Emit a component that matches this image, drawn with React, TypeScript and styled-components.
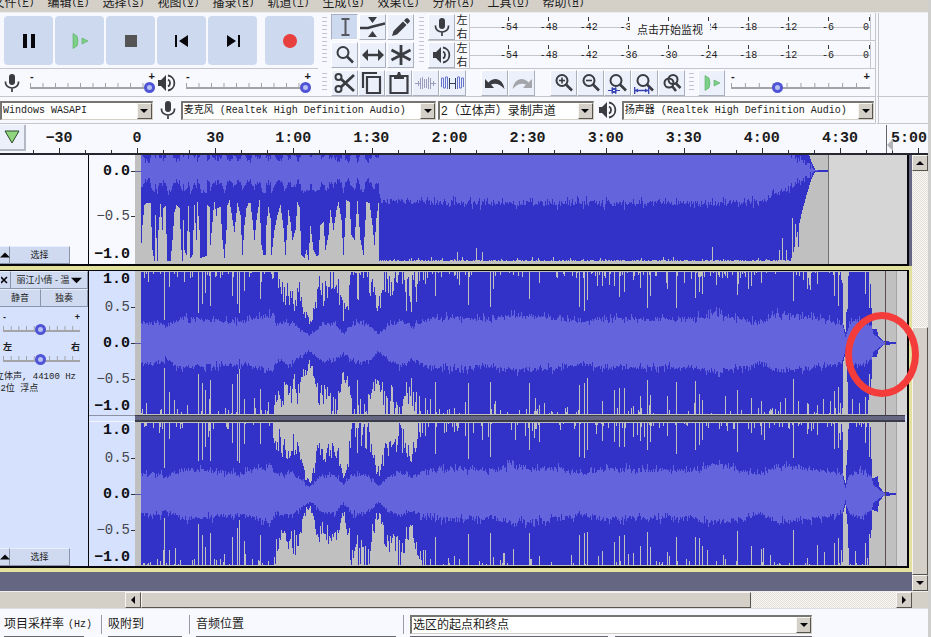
import React from "react";
import styled, { createGlobalStyle, css } from "styled-components";

const c = {
  face: "#d4d0c8",
  panel: "#f8f9fe",
  line: "#c4c6cc",
  button: "#cdd9ef",
  tool: "#ebf0fb",
  selected: "#d6e2fd",
  dark: "#646682",
  clip: "#c0c0c0",
  empty: "#d6d6d6",
  peak: "#3232c8",
  rms: "#6464dc",
  icon: "#3a3c42",
};

const cjk = `"Liberation Sans", "Noto Sans CJK SC", sans-serif`;
const mono = `"Liberation Mono", "Noto Sans CJK SC", monospace`;

const Global = createGlobalStyle`
  * { box-sizing: border-box; }
  body { margin: 0; background: #cfcfcd; font: 12px/16px ${cjk}; color: #1c1c20; overflow: hidden; }
  button, input, select { font: inherit; color: inherit; margin: 0; padding: 0; border: 0; border-radius: 0; }
  button { display: flex; align-items: center; justify-content: center; }
  svg { display: block; flex: none; }
`;

/* ---------- frame ---------- */

const Window = styled.div`
  position: relative;
  display: flex;
  flex-direction: column;
  height: 100vh;
  margin-right: 3px;
  background: ${c.panel};
`;

const MenuBar = styled.nav`
  display: flex;
  flex: none;
  align-items: flex-end;
  gap: 12px;
  height: 12px;
  padding-bottom: 1px;
  margin-left: -8px;
  background: ${c.face};
  overflow: hidden;
`;

const MenuItem = styled.button`
  flex: none;
  width: 43px;
  background: none;
  line-height: 16px;
  white-space: nowrap;
  small { font: 10px/16px "Liberation Mono", monospace; }
`;

const Dock = styled.div`
  display: grid;
  grid-template-columns: 318px 1fr 53px;
  flex: none;
  border-top: 1px solid #eceef2;
`;

const DeviceDock = styled.div`
  display: grid;
  grid-template-columns: 1fr 53px;
  flex: none;
`;

const Column = styled.div`
  display: flex;
  flex-direction: column;
  min-width: 0;
`;

const Bar = styled.div<{ $h: number; $gap?: number; $left?: number }>`
  display: flex;
  align-items: center;
  height: ${(p) => p.$h}px;
  gap: ${(p) => p.$gap ?? 0}px;
  padding-left: ${(p) => p.$left ?? 0}px;
  border-bottom: 1px solid ${c.line};
`;

const DockEnd = styled.div`
  border-left: 4px double ${c.line};
  border-bottom: 1px solid ${c.line};
`;

const TransportButton = styled.button<{ $apart?: boolean }>`
  width: 49px;
  height: 49px;
  border-radius: 4px;
  background: ${c.button};
  margin-left: ${(p) => (p.$apart ? 6 : 0)}px;
`;

const ToolButton = styled.button<{ $on?: boolean }>`
  flex: none;
  width: 27px;
  height: 26px;
  background: ${(p) => (p.$on ? c.button : c.tool)};
  border: 1px solid #fff;
  border-right-color: #a9afbd;
  border-bottom-color: #a9afbd;
  ${(p) => p.$on && css`border-color: #a9afbd #fff #fff #a9afbd;`}
`;

const Grip = styled.span<{ $h?: number }>`
  flex: none;
  width: 5px;
  height: ${(p) => p.$h ?? 20}px;
  margin: 0 4px;
  background: repeating-linear-gradient(#c3c5cc 0 1px, transparent 1px 4px);
`;

const Spacer = styled.span<{ $w: number }>`
  flex: none;
  width: ${(p) => p.$w}px;
`;

const Tools = styled.div`
  display: grid;
  grid-template-columns: 13px 84px 13px 1fr;
  grid-template-rows: 28px 28px;
`;

const ToolRow = styled.div`
  display: flex;
  align-items: center;
  gap: 1px;
`;

const GripCell = styled.div`
  grid-row: span 2;
  display: flex;
  align-items: center;
`;

/* ---------- meters ---------- */

const MeterRow = styled.div`
  display: flex;
  align-items: center;
  min-width: 0;
  border-bottom: 1px solid ${c.line};
`;

const Sides = styled.span`
  width: 14px;
  text-align: center;
  font-size: 11px;
  line-height: 14px;
`;

const MeterScale = styled.div`
  position: relative;
  flex: 1;
  display: grid;
  grid-template-columns: 19px repeat(9, 1fr) 22px;
  height: 26px;
  margin-right: 4px;
  border-left: 1px solid ${c.line};
  border-right: 1px solid ${c.line};
  background: linear-gradient(${c.line}, ${c.line}) 0 13px / 100% 1px no-repeat;
`;

const Mark = styled.span<{ $end?: boolean }>`
  padding-top: 4px;
  padding-right: ${(p) => (p.$end ? 1 : 0)}px;
  text-align: ${(p) => (p.$end ? "right" : "center")};
  font: 10px/19px ${mono};
  background: linear-gradient(#333, #333) ${(p) => (p.$end ? "right" : "center")} 3px / 1px 4px no-repeat;
`;

const MonitorHint = styled.button`
  position: absolute;
  top: 7px;
  left: 50%;
  width: 80px;
  height: 18px;
  transform: translateX(-50%);
  background: ${c.panel};
  font-size: 11px;
`;

/* ---------- sliders and lists ---------- */

const SliderBox = styled.label`
  flex: 1;
  display: grid;
  grid-template-columns: 1fr auto;
  font: bold 11px/9px ${cjk};
`;

const Range = styled.input`
  grid-column: span 2;
  appearance: none;
  width: 100%;
  height: 12px;
  background:
    linear-gradient(#a4a4a8, #a4a4a8) 0 6px / 100% 2px no-repeat,
    linear-gradient(90deg, #a0a0a4 1px, transparent 1px) 0 2px / 10% 4px repeat-x;
  &::-webkit-slider-thumb {
    appearance: none;
    width: 11px;
    height: 11px;
    border: 3px solid #4f55d6;
    border-radius: 50%;
    background: #b9c0f2;
  }
`;

const SelectFrame = styled.span<{ $w: number }>`
  display: flex;
  flex: ${(p) => p.$w} 1 0;
  min-width: 0;
  height: 19px;
  background: #fff;
  border: 2px solid #77756f;
  border-right: 1px solid ${c.face};
  border-bottom: 1px solid ${c.face};
`;

const SelectInput = styled.select<{ $mono?: boolean }>`
  appearance: none;
  flex: 1;
  min-width: 0;
  background: none;
  font: ${(p) => (p.$mono ? `10px/16px ${mono}` : `12px/16px ${cjk}`)};
  padding-left: 1px;
`;

const raised = css`
  background-color: ${c.face};
  border: 1px solid;
  border-color: #f6f5f2 #56544f #56544f #f6f5f2;
`;

const DropMark = styled.span`
  ${raised}
  display: flex;
  align-items: center;
  justify-content: center;
  width: 15px;
  pointer-events: none;
`;

/* ---------- ruler ---------- */

const Ruler = styled.div`
  display: grid;
  grid-template-columns: 26px 1fr;
  grid-template-rows: 23px 5px;
  flex: none;
  margin-top: 1px;
  border-bottom: 2px solid #26262e;
`;

const PinButton = styled.button`
  height: 26px;
  background: ${c.tool};
  border-right: 2px solid #b4b8c4;
  border-bottom: 2px solid #b4b8c4;
`;

const Times = styled.div`
  display: grid;
  grid-template-columns: 72px repeat(10, 1fr) 49px;
  text-align: center;
  font: bold 15px/27px ${mono};
  span:first-child { padding-right: 6px; }
`;

const LastTime = styled.span`
  position: relative;
  height: 28px;
  margin-left: 7px;
  padding-right: 1px;
  border-left: 1px solid #66666c;
  text-align: right;
  svg { position: absolute; left: 0; bottom: 2px; }
`;

const Ticks = styled.svg`
  grid-column: 1 / -1;
  width: 100%;
  height: 5px;
`;

/* ---------- tracks ---------- */

const Workspace = styled.div`
  display: grid;
  grid-template-columns: 1fr 16px;
  grid-template-rows: 1fr 17px;
  flex: 1;
  min-height: 0;
`;

const TrackList = styled.main`
  background: ${c.dark};
  overflow: hidden;
`;

const FirstTrack = styled.section`
  display: grid;
  grid-template-columns: 89px 46px 1fr;
  grid-template-rows: 109px;
  margin-right: 3px;
  border-right: 2px solid #08080c;
  border-bottom: 2px solid #08080c;
  background: ${c.panel};
`;

const Focused = styled.section`
  border: solid #e2e29c;
  border-width: 4px 3px 4px 0;
`;

const StereoTrack = styled.div`
  display: grid;
  grid-template-columns: 89px 46px 1fr;
  grid-template-rows: 144px 7px 144px;
  border: solid #08080c;
  border-width: 1px 2px 2px 0;
  background: ${c.selected};
`;

const Panel = styled.div`
  grid-row: 1 / -1;
  display: flex;
  flex-direction: column;
  border-right: 1px solid #08080c;
  overflow: hidden;
  font-size: 10px;
`;

const PanelRow = styled.div<{ $foot?: boolean }>`
  display: flex;
  flex: none;
  width: ${(p) => (p.$foot ? "70px" : "100%")};
  height: 18px;
  margin-top: ${(p) => (p.$foot ? "auto" : 0)};
`;

const PanelButton = styled.button<{ $w?: number }>`
  flex: ${(p) => (p.$w ? "none" : 1)};
  width: ${(p) => (p.$w ? `${p.$w}px` : "auto")};
  gap: 1px;
  white-space: nowrap;
  background: #cfdaf0;
  border-right: 1px solid #8a94aa;
  border-bottom: 1px solid #8a94aa;
  border-top: 1px solid #e8effc;
  font-size: 9px;
`;

const PanelSlider = styled.div`
  display: flex;
  height: 30px;
  padding: 5px 8px 0 3px;
  label { font-size: 9px; line-height: 10px; }
`;

const PanelInfo = styled.p`
  margin: 4px 0 0 -5px;
  white-space: pre;
  font: 9px/12px ${mono};
`;

const Scale = styled.div<{ $rows: string }>`
  display: grid;
  grid-template-rows: ${(p) => p.$rows};
`;

const Level = styled.span<{ $b?: boolean }>`
  display: flex;
  align-items: center;
  justify-content: flex-end;
  white-space: nowrap;
  font: ${(p) => (p.$b ? `bold 15px/17px ${mono}` : `14px/17px ${mono}`)};
  color: ${(p) => (p.$b ? "#101014" : "#44464e")};
`;

const Dash = styled.i<{ $show?: boolean }>`
  width: 4px;
  height: 1px;
  margin-left: 1px;
  background: ${(p) => (p.$show ? "#333" : "transparent")};
`;

const Wave = styled.svg`
  width: 100%;
  height: 100%;
  background: ${c.empty};
  shape-rendering: crispEdges;
`;

const ScaleGap = styled.div`
  border-top: 1px solid #8c92a4;
  border-bottom: 1px solid #f2f6ff;
`;

const ChannelGap = styled.div`
  margin-right: 2px;
  background: ${c.dark};
  border-top: 1px solid #3a3b48;
  border-bottom: 2px solid #3a3b48;
`;

/* ---------- scroll bars ---------- */

const dither = css`
  background: repeating-conic-gradient(#e2dfd8 0 25%, #f8f7f4 0 50%) 0 0 / 2px 2px;
`;

const VScroll = styled.div`
  display: grid;
  grid-template-rows: 16px 156fr 249fr 16px;
  ${dither}
`;

const HScroll = styled.div`
  display: grid;
  grid-column: 1 / -1;
  grid-template-columns: 125fr 16px 610fr 145fr 16px 16px;
  background: ${c.face};
  border-top: 1px solid #f0efec;
`;

const Trough = styled.div`
  ${dither}
`;

const ScrollButton = styled.button`
  ${raised}
`;

const Thumb = styled.div`
  ${raised}
`;

/* ---------- selection bar ---------- */

const SelectionBar = styled.footer`
  display: grid;
  grid-template-columns: 98px 82px 208px 402px 1fr;
  column-gap: 6px;
  flex: none;
  height: 29px;
  padding: 6px 0 0 4px;
  border-top: 1px solid #dcdde2;
  overflow: hidden;
`;

const Field = styled.label<{ $rule?: boolean }>`
  display: flex;
  flex-direction: column;
  gap: 2px;
  > span:first-child {
    display: flex;
    flex: none;
    height: 19px;
    line-height: 19px;
    border-right: ${(p) => (p.$rule ? "1px solid #9a9ca4" : "0")};
  }
  small { font: 10px/20px ${mono}; margin-left: 4px; }
`;

const FieldBox = styled.input<{ $w: number }>`
  width: ${(p) => p.$w}px;
  height: 20px;
  border: 2px solid #66666c;
  background: #fff;
`;

const RangeFields = styled.div`
  display: grid;
  grid-template-columns: 1fr 1fr;
  gap: 2px 7px;
  > span { grid-column: span 2; }
  input { width: 100%; }
`;

const Highlight = styled.div`
  position: absolute;
  top: 312px;
  right: 9px;
  width: 74px;
  height: 85px;
  border: 7px solid #f43c3a;
  border-radius: 50%;
  pointer-events: none;
`;

/* ---------- icons ---------- */

const Mic = () => (
  <svg width="20" height="20" viewBox="0 0 20 20" fill="none" stroke={c.icon} strokeWidth="1.7">
    <rect x="7" y="1" width="6" height="11" rx="3" fill={c.icon} stroke="none" />
    <path d="M3.500 8.500v1a6.500 5.500 0 0 0 13 0v-1M10 15v4" />
  </svg>
);
const Speaker = () => (
  <svg width="20" height="20" viewBox="0 0 20 20" fill="none" stroke={c.icon} strokeWidth="1.8">
    <path d="M1 7h3l5-5v16l-5-5H1z" fill={c.icon} stroke="none" />
    <path d="M11 6.500a4 4 0 0 1 0 7M11 2.500a7.600 7.600 0 0 1 0 15" />
  </svg>
);
const Lens = ({ kind }: { kind?: "in" | "out" | "sel" | "fit" | "toggle" }) => (
  <svg width="22" height="22" viewBox="0 0 22 22" fill="none" stroke={c.icon} strokeWidth="2">
    {kind === "toggle" && <circle cx="8" cy="11" r="4.500" />}
    <circle cx={kind === "toggle" ? 12 : 9} cy={kind === "toggle" ? 7.5 : 8.5} r={kind === "toggle" ? 4.5 : 5.5} />
    <path d={kind === "toggle" ? "M14.500 11l5 5M11 14l4 5" : "M13 12.500l6 6"} strokeWidth="2.600" />
    {(kind === "in" || kind === "out") && <path d="M6 8.500h6" strokeWidth="1.600" />}
    {kind === "in" && <path d="M9 5.500v6" strokeWidth="1.600" />}
    {kind === "sel" && (
      <path d="M1 18.500h4M9 18.500h4M5 15.500v6l4-3zM9 15.500v6l-4-3z" stroke="#3440b0" strokeWidth="1" fill="#3440b0" />
    )}
    {kind === "fit" && (
      <g stroke="#3440b0" strokeWidth="1.300" fill="#3440b0">
        <path d="M.7 15v7M14.700 15v7M1 18.500h13" />
        <path d="M1 18.500l3-2v4zM14 18.500l-3-2v4z" stroke="none" />
      </g>
    )}
  </svg>
);
const Play = () => (
  <svg width="20" height="20" viewBox="0 0 20 20" fill="#7ccf86" stroke="#56ad62" strokeWidth=".6">
    <path d="M3 2.500l4 2.500q2 5 0 10l-4 2.500z" />
    <path d="M12 7l6 3-6 3z" />
  </svg>
);
const IBeam = () => (
  <svg width="20" height="20" viewBox="0 0 20 20" fill="none" stroke="#55585f" strokeWidth="2">
    <path d="M6.500 2h8M6.500 18h8M10.500 2v16" />
  </svg>
);
const Envelope = () => (
  <svg width="25" height="20" viewBox="0 0 25 20" fill={c.icon}>
    <path d="M8 0h9l-4.500 6zM8 20h9l-4.500-6z" />
    <path d="M0 11h8l5-1.500 12-3" fill="none" stroke={c.icon} strokeWidth="2.500" />
  </svg>
);
const Pencil = () => (
  <svg width="20" height="20" viewBox="0 0 20 20" fill={c.icon}>
    <path d="M1 19l1.500-5L12 4.500 15.500 8 6 17.500zM13 3.500l2-2q1-.8 2 0L18.500 3q.8 1 0 2l-2 2z" />
  </svg>
);
const Shift = () => (
  <svg width="22" height="20" viewBox="0 0 22 20" fill={c.icon}>
    <path d="M0 10l6-6v4.800h10V4l6 6-6 6v-4.800H6V16z" />
  </svg>
);
const Star = () => (
  <svg width="22" height="22" viewBox="0 0 22 22" stroke={c.icon} strokeWidth="2.800">
    <path d="M11 1v20M1.500 6l19 10M20.500 6l-19 10" />
  </svg>
);
const Cut = () => (
  <svg width="22" height="22" viewBox="0 0 22 22" fill="none" stroke={c.icon} strokeWidth="2">
    <circle cx="4.500" cy="5" r="3" />
    <circle cx="4.500" cy="17" r="3" />
    <path d="M7 7l13 12M7 15L20 3" strokeWidth="2.800" />
  </svg>
);
const Copy = () => (
  <svg width="22" height="24" viewBox="0 0 22 24" fill="none" stroke={c.icon} strokeWidth="2.200">
    <path d="M2 17V2h14M6 6h13v16H6z" />
  </svg>
);
const Paste = () => (
  <svg width="22" height="24" viewBox="0 0 22 24" fill="none" stroke={c.icon} strokeWidth="2.200">
    <path d="M2.500 5h17v17h-17z" />
    <path d="M6 4h3l1-3h2l1 3h3v4H6z" fill={c.icon} stroke="none" />
  </svg>
);
const Trim = () => (
  <svg width="21" height="18" viewBox="0 0 21 18" fill="none" stroke="#9a9eba" strokeWidth="1">
    <path d="M0 9.500h5M16 9.500h5M5.500 4v11M7.500 3v12M9.500 5v9M11.500 5v9M13.500 3v12M15.500 4v11M3.500 7v5M18.500 7v5" />
  </svg>
);
const Silence = () => (
  <svg width="23" height="18" viewBox="0 0 23 18" fill="none" stroke="#6673cc" strokeWidth="1">
    <path d="M.5 13V4h2v10h2V3h2v12M16.500 15V3h2v11h2V4h2v9" />
    <path d="M8 9.500h7M8.500 4v11M14.500 4v11" stroke="#33405e" />
  </svg>
);
const Undo = ({ redo }: { redo?: boolean }) => (
  <svg width="22" height="18" viewBox="0 0 22 18" fill={redo ? "#a3a5aa" : c.icon}>
    <path d={redo ? "M21 5v9h-9l3-3.500Q8 8 1.500 15 3 6 10 5q5 0 7.500 3.500z" : "M1 5v9h9l-3-3.500Q14 8 20.500 15 19 6 12 5q-5 0-7.500 3.500z"} />
  </svg>
);
const Arrow = ({ d = "down", s = 8 }: { d?: "down" | "up" | "left" | "right"; s?: number }) => {
  const path = { down: "M0 2h8L4 6z", up: "M0 6h8L4 2z", left: "M6 0v8L2 4z", right: "M2 0v8l4-4z" }[d];
  return (
    <svg width={s} height={s} viewBox="0 0 8 8" fill="#08080c">
      <path d={path} />
    </svg>
  );
};
const Shape = ({ d, fill = "#08080c", stroke }: { d: string; fill?: string; stroke?: string }) => (
  <svg width="16" height="16" viewBox="0 0 16 16" fill={fill} stroke={stroke}>
    <path d={d} />
  </svg>
);

/* ---------- wave data ---------- */

type Keys = [number, number][];
const X0 = 135;
const WIDTH = 772;

const at = (keys: Keys, x: number) => {
  if (x <= keys[0][0]) return keys[0][1];
  for (let i = 1; i < keys.length; i++) {
    const [bx, by] = keys[i];
    if (x <= bx) {
      const [ax, ay] = keys[i - 1];
      return ay + ((by - ay) * (x - ax)) / (bx - ax);
    }
  }
  return keys[keys.length - 1][1];
};
const parse = (s: string): Keys => s.split(" ").map((p) => p.split(":").map(Number) as [number, number]);
const random = (seed: number) => () => {
  seed = (seed * 1664525 + 1013904223) % 4294967296;
  return seed / 4294967296;
};
const column = (x: number, top: number, bottom: number) =>
  `M${x - X0} ${top.toFixed(1)}h1V${bottom.toFixed(1)}h-1z`;

const MONO_LOW = parse(
  "141:243 142:225 144:205 146:203 150:203 152:250 154:261 155:215 157:261 158:230 160:204 162:230 163:208 165:206 167:261 170:261 172:240 174:212 176:205 179:208 181:250 182:261 183:220 184:250 186:255 188:206 190:258 192:255 194:205 196:240 197:202 199:230 200:258 206:256 207:205 209:207 210:245 213:210 214:202 216:216 217:208 220:207 222:240 224:258 226:230 227:205 229:200 232:220 234:232 237:203 240:215 242:255 244:225 246:208 248:203 250:203 252:220 254:240 256:220 259:200 261:245 263:255 265:255 266:225 268:207 270:218 271:255 274:230 277:215 280:205 283:228 285:255 288:210 290:222 292:240 295:230 297:202 299:207 301:255 304:258 306:250 308:260 310:226 313:250 316:256 318:255 320:225 323:222 325:250 328:235 330:210 333:230 336:210 338:202 341:220 343:255 346:200 349:202 351:235 354:240 357:201 360:240 363:255 366:202 369:203 372:225 374:245 376:218 378:203 379:261 790:261 793:252 797:232 801:214 806:195 811:179 815:171 829:171"
);
const MONO_RMS = parse("380:201 480:203 600:203 700:203 760:202 778:193 795:184 806:178 814:171 829:171");
const MONO_SPIKES = parse("457:252 476:248 482:252 712:247 779:250 782:238 786:250 792:218 795:224 798:247");

const monoWave = () => {
  const r = random(7);
  const spikes = new Map(MONO_SPIKES);
  let peak = "";
  let rms = "";
  for (let x = 141; x < 829; x++) {
    const base = at(MONO_LOW, x);
    const low = spikes.get(x) ?? (x > 379 && x < 790 ? base - (r() < 0.08 ? r() * 4 : r()) : base);
    const jitter = x > 812 ? 0 : (r() - 0.5) * (x > 379 ? (r() < 0.3 ? 14 : 6) : 5);
    const body = Math.min(low, (x > 379 ? at(MONO_RMS, x) : 180 + (base - 200) * 0.2) + jitter);
    peak += column(x, x > 800 ? Math.max(0, 341 - low - 155) : 0, low - 155 + (x > 814 ? 0.5 : 0));
    if (x < 818) rms += column(x, Math.max(0, 341 - body - 155), body - 155);
  }
  return { peak, rms };
};

const AMP_A = parse(
  "141:1 270:1 275:.92 283:.72 290:.68 295:.62 300:.72 303:.45 309:.28 314:.42 318:.8 322:.65 328:.75 333:.9 338:.75 343:.4 348:.6 352:.95 358:.8 363:.97 368:.9 375:.6 380:.55 385:.88 392:.75 400:.97 408:.72 415:.85 420:1 838:1 842:.9 843:.25 845:.15 847:.6 849:1 869:1 871:.5 872:.2 876:.2 878:.1 883:.03 896:.01"
);
const AMP_B = parse(
  "141:1 270:1 275:.85 283:.6 290:.68 295:.7 300:.5 305:.25 309:.15 314:.35 318:.62 322:.5 328:.55 333:.6 338:.5 343:.25 348:.5 352:.95 358:.8 363:.85 368:.85 375:.35 380:.3 385:.65 392:.65 400:.85 406:.6 411:.5 417:.85 424:1 838:.98 842:.85 843:.25 845:.15 847:.5 849:1 869:1 871:.5 872:.22 877:.25 879:.1 883:.03 896:.01"
);
const BODY = parse(
  "141:20 160:20 165:16 180:24 200:23 235:21 240:20 260:25 272:27 275:19 290:20 300:14 309:7 315:12 322:19 335:18 343:9 352:19 368:18 378:8 388:17 400:22 411:16 425:23 450:25 490:23 510:27 530:26 560:24 585:20 600:24 690:23 715:28 740:24 761:19 775:27 790:27 830:22 842:19 845:6 849:20 860:23 868:18 871:17 873:9 878:5 882:2 886:1"
);
const SPIKES = parse(
  "164:.35 169:.75 198:.45 202:.55 205:.7 210:.5 232:.65 237:.5 239:.42 244:.72 260:.65 285:.6 294:.5 357:.55 406:.52 411:.5 416:.66 425:.75 435:.6 454:.88 468:.55 490:.58 529:.6 539:.8 579:.54 584:.5 587:.56 602:.8 614:.72 619:.62 624:.65 633:.88 640:.76 647:.56 650:.7 667:.75 676:.54 695:.6 699:.65 702:.75 737:.6 751:.8 761:.78 793:.57 807:.83 817:.8 834:.62 838:.6 865:.75 869:.5"
);

const stereoWave = (amp: Keys, seed: number) => {
  const r = random(seed);
  const spikes = new Map(SPIKES);
  let peak = "";
  let rms = "";
  for (let x = 141; x < 897; x++) {
    const base = at(amp, x);
    const edge = (): number => {
      if (spikes.has(x)) return Math.min(base, spikes.get(x)! + (r() - 0.5) * 0.16);
      if (base > 0.97) {
        const chance = r();
        return chance < 0.05 ? 1 - r() * 0.25 : chance < 0.2 ? 1 - r() * 0.09 : 1;
      }
      return (x > 842 && x < 846) || x > 870 ? base : Math.min(1, base * (0.75 + r() * 0.55));
    };
    const up = Math.max(0.3, edge() * 71);
    const down = Math.max(0.7, edge() * 71);
    const body = at(BODY, x);
    const shake = x > 870 ? 0 : body / 24;
    const b1 = Math.min(up, body + (r() - 0.4) * (r() < 0.3 ? 12 : 5) * shake);
    const b2 = Math.min(down, body + (r() - 0.4) * (r() < 0.3 ? 12 : 5) * shake);
    peak += column(x, 72 - up, 72 + down);
    if (x < 886) rms += column(x, 72 - b1, 72 + b2);
  }
  return { peak, rms };
};

const waves = [monoWave(), stereoWave(AMP_A, 21), stereoWave(AMP_B, 58)];

const Waveform = ({ n, h, end, cursor }: { n: number; h: number; end: number; cursor?: boolean }) => (
  <Wave viewBox={`0 0 ${WIDTH} ${h}`} preserveAspectRatio="none" role="img" aria-label={`波形 ${n + 1}`}>
    <rect width={end - X0} height={h} fill={c.clip} />
    <path d={waves[n].peak} fill={c.peak} />
    <path d={waves[n].rms} fill={c.rms} />
    <rect x={end - X0 - 1} width="1" height={h} fill={n ? "#a4a4a4" : "#707074"} />
    <rect y={n ? 72 : 16} width="6" height="1" fill="#5c5ca0" />
    {cursor && <rect x={886 - X0 - 1} width="1" height={h} fill="#5c4c50" />}
  </Wave>
);

/* ---------- composed controls ---------- */

const Slider = ({ name, value, low = "-", high = "+" }: { name: string; value: number; low?: string; high?: string }) => (
  <SliderBox>
    <span>{low}</span>
    <span>{high}</span>
    <Range type="range" aria-label={name} defaultValue={value} />
  </SliderBox>
);

const Select = ({ name, text, w, latin }: { name: string; text: string; w: number; latin?: boolean }) => (
  <SelectFrame $w={w}>
    <SelectInput aria-label={name} $mono={latin}>
      <option>{text}</option>
    </SelectInput>
    <DropMark>
      <Arrow />
    </DropMark>
  </SelectFrame>
);

const Meter = ({ hint }: { hint?: boolean }) => (
  <MeterRow>
    <ToolButton aria-label={hint ? "录制电平" : "播放电平"}>{hint ? <Mic /> : <Speaker />}</ToolButton>
    <Sides>
      左
      <br />右
    </Sides>
    <MeterScale>
      <span />
      {[54, 48, 42, 36, 30, 24, 18, 12, 6].map((v) => (
        <Mark key={v}>{hint && v === 30 ? "" : `-${v}`}</Mark>
      ))}
      <Mark $end>0</Mark>
      {hint && <MonitorHint>点击开始监视</MonitorHint>}
    </MeterScale>
  </MeterRow>
);

const Levels = ({ values, rows }: { values: string[]; rows: string }) => (
  <Scale $rows={rows}>
    {values.map((v) => (
      <Level key={v} $b={!v.endsWith("5")}>
        {v}
        <Dash $show={!v.endsWith("1.0")} />
      </Level>
    ))}
  </Scale>
);

const stereoLevels = ["1.0", "0.5", "0.0", "−0.5", "−1.0"];
const stereoRows = "17px 38px 34px 38px 17px";

const PanelFoot = () => (
  <PanelRow $foot>
    <PanelButton $w={10} aria-label="折叠">
      <Arrow d="up" s={10} />
    </PanelButton>
    <PanelButton>选择</PanelButton>
  </PanelRow>
);

const menus = ["文件F", "编辑E", "选择S", "视图V", "播录R", "轨道T", "生成G", "效果C", "分析A", "工具O", "帮助H"];
const times = ["−30", "0", "30", "1:00", "1:30", "2:00", "2:30", "3:00", "3:30", "4:00", "4:30"];
const tickPath = Array.from({ length: 35 }, (_, i) => {
  const x = Math.round(33 + i * 26.04);
  return `M${x + 0.5} ${i % 3 === 1 ? 0 : 2}V5`;
}).join("");

export default function App() {
  return (
    <Window>
      <Global />
      <MenuBar>
        {menus.map((m) => (
          <MenuItem key={m}>
            {m.slice(0, 2)}
            <small>
              (<u>{m[2]}</u>)
            </small>
          </MenuItem>
        ))}
      </MenuBar>

      <Dock>
        <Column>
          <Bar $h={56} $gap={2} $left={4}>
            <TransportButton aria-label="暂停"><Shape d="M2 1h4v14H2zM10 1h4v14h-4z" /></TransportButton>
            <TransportButton aria-label="播放"><Play /></TransportButton>
            <TransportButton aria-label="停止"><Shape d="M2 2h12v12H2z" fill="#555" /></TransportButton>
            <TransportButton aria-label="跳至开头"><Shape d="M1 2h2v12H1zM14 2v12L5 8z" /></TransportButton>
            <TransportButton aria-label="跳至结尾"><Shape d="M13 2h2v12h-2zM2 2v12l9-6z" /></TransportButton>
            <TransportButton $apart aria-label="录制"><Shape d="M8 1a7 7 0 1 0 .01 0z" fill="#e8403e" /></TransportButton>
          </Bar>
          <Bar $h={28} $left={2}>
            <Mic />
            <Spacer $w={8} />
            <Slider name="录制音量" value={100} />
            <Spacer $w={2} />
            <Speaker />
            <Spacer $w={9} />
            <Slider name="播放音量" value={100} />
            <Spacer $w={7} />
          </Bar>
        </Column>
        <Column>
          <Tools>
            <GripCell><Grip $h={48} /></GripCell>
            <ToolRow>
              <ToolButton $on aria-label="选择工具"><IBeam /></ToolButton>
              <ToolButton aria-label="包络工具"><Envelope /></ToolButton>
              <ToolButton aria-label="绘制工具"><Pencil /></ToolButton>
            </ToolRow>
            <GripCell><Grip $h={48} /></GripCell>
            <Meter hint />
            <ToolRow>
              <ToolButton aria-label="缩放工具"><Lens /></ToolButton>
              <ToolButton aria-label="时移工具"><Shift /></ToolButton>
              <ToolButton aria-label="多功能工具"><Star /></ToolButton>
            </ToolRow>
            <Meter />
          </Tools>
          <Bar $h={28}>
            <Grip />
            <ToolButton aria-label="剪切"><Cut /></ToolButton>
            <ToolButton aria-label="复制"><Copy /></ToolButton>
            <ToolButton aria-label="粘贴"><Paste /></ToolButton>
            <ToolButton aria-label="修剪"><Trim /></ToolButton>
            <ToolButton aria-label="静音"><Silence /></ToolButton>
            <Spacer $w={15} />
            <ToolButton aria-label="撤销"><Undo /></ToolButton>
            <ToolButton aria-label="重做"><Undo redo /></ToolButton>
            <Spacer $w={15} />
            <ToolButton aria-label="放大"><Lens kind="in" /></ToolButton>
            <ToolButton aria-label="缩小"><Lens kind="out" /></ToolButton>
            <ToolButton aria-label="适应选区"><Lens kind="sel" /></ToolButton>
            <ToolButton aria-label="适应项目"><Lens kind="fit" /></ToolButton>
            <ToolButton aria-label="切换缩放"><Lens kind="toggle" /></ToolButton>
            <Grip />
            <ToolButton aria-label="变速播放"><Play /></ToolButton>
            <Spacer $w={6} />
            <Slider name="播放速度" value={32} />
            <Spacer $w={5} />
          </Bar>
        </Column>
        <DockEnd />
      </Dock>

      <DeviceDock>
        <Bar $h={27}>
          <Select name="音频主机" text="Windows WASAPI" w={152} latin />
          <Spacer $w={5} />
          <Mic />
          <Spacer $w={3} />
          <Select name="录音设备" text="麦克风 (Realtek High Definition Audio)" w={256} latin />
          <Spacer $w={2} />
          <Select name="录音声道" text="2（立体声）录制声道" w={155} />
          <Spacer $w={4} />
          <Speaker />
          <Spacer $w={4} />
          <Select name="播放设备" text="扬声器 (Realtek High Definition Audio)" w={253} latin />
          <Spacer $w={1} />
        </Bar>
        <DockEnd />
      </DeviceDock>

      <Ruler>
        <PinButton aria-label="固定播放头">
          <Shape d="M1 2h14L8 14z" fill="#8fd67c" stroke="#2e4a2c" />
        </PinButton>
        <Times>
          {times.map((t) => (
            <span key={t}>{t}</span>
          ))}
          <LastTime>
            5:00
            <svg width="6" height="12" viewBox="0 0 6 12" fill="#b4b4b8">
              <path d="M0 6l6-6v12z" />
            </svg>
          </LastTime>
        </Times>
        <Ticks viewBox="0 0 928 5" preserveAspectRatio="none" aria-hidden="true">
          <path d={tickPath} stroke="#303036" fill="none" />
        </Ticks>
      </Ruler>

      <Workspace>
        <TrackList>
          <FirstTrack>
            <Panel>
              <PanelFoot />
            </Panel>
            <Levels values={["0.0", "−0.5", "−1.0"]} rows="33px 56px 20px" />
            <Waveform n={0} h={109} end={829} />
          </FirstTrack>
          <Focused>
            <StereoTrack>
              <Panel>
                <PanelRow>
                  <PanelButton $w={11} aria-label="关闭">
                    <svg width="8" height="8" viewBox="0 0 8 8" stroke="#08080c" strokeWidth="1.600">
                      <path d="M0 1l6 6M6 1L0 7" />
                    </svg>
                  </PanelButton>
                  <PanelButton>
                    丽江小倩 - 温
                    <Arrow s={11} />
                  </PanelButton>
                </PanelRow>
                <PanelRow>
                  <PanelButton $w={41}>静音</PanelButton>
                  <PanelButton>独奏</PanelButton>
                </PanelRow>
                <PanelSlider>
                  <Slider name="增益" value={48} />
                </PanelSlider>
                <PanelSlider>
                  <Slider name="声像" value={48} low="左" high="右" />
                </PanelSlider>
                <PanelInfo>{"立体声, 44100 Hz\n32位 浮点"}</PanelInfo>
                <PanelFoot />
              </Panel>
              <Levels values={stereoLevels} rows={stereoRows} />
              <Waveform n={1} h={144} end={897} cursor />
              <ScaleGap />
              <ChannelGap />
              <Levels values={stereoLevels} rows={stereoRows} />
              <Waveform n={2} h={144} end={897} cursor />
            </StereoTrack>
          </Focused>
        </TrackList>
        <VScroll>
          <ScrollButton aria-label="向上"><Arrow d="up" /></ScrollButton>
          <span />
          <Thumb />
          <ScrollButton aria-label="向下"><Arrow /></ScrollButton>
        </VScroll>
        <HScroll>
          <span />
          <ScrollButton aria-label="向左"><Arrow d="left" /></ScrollButton>
          <Thumb />
          <Trough />
          <ScrollButton aria-label="向右"><Arrow d="right" /></ScrollButton>
        </HScroll>
      </Workspace>

      <SelectionBar>
        <Field $rule>
          <span>
            项目采样率 <small>(Hz)</small>
          </span>
          <FieldBox $w={80} />
        </Field>
        <Field $rule>
          <span>吸附到</span>
          <FieldBox $w={74} />
        </Field>
        <Field $rule>
          <span>音频位置</span>
          <FieldBox $w={200} />
        </Field>
        <RangeFields>
          <SelectFrame as="span" $w={1}>
            <SelectInput aria-label="选区格式">
              <option>选区的起点和终点</option>
            </SelectInput>
            <DropMark>
              <Arrow />
            </DropMark>
          </SelectFrame>
          <FieldBox $w={197} aria-label="起点" />
          <FieldBox $w={197} aria-label="终点" />
        </RangeFields>
      </SelectionBar>

      <Highlight />
    </Window>
  );
}
